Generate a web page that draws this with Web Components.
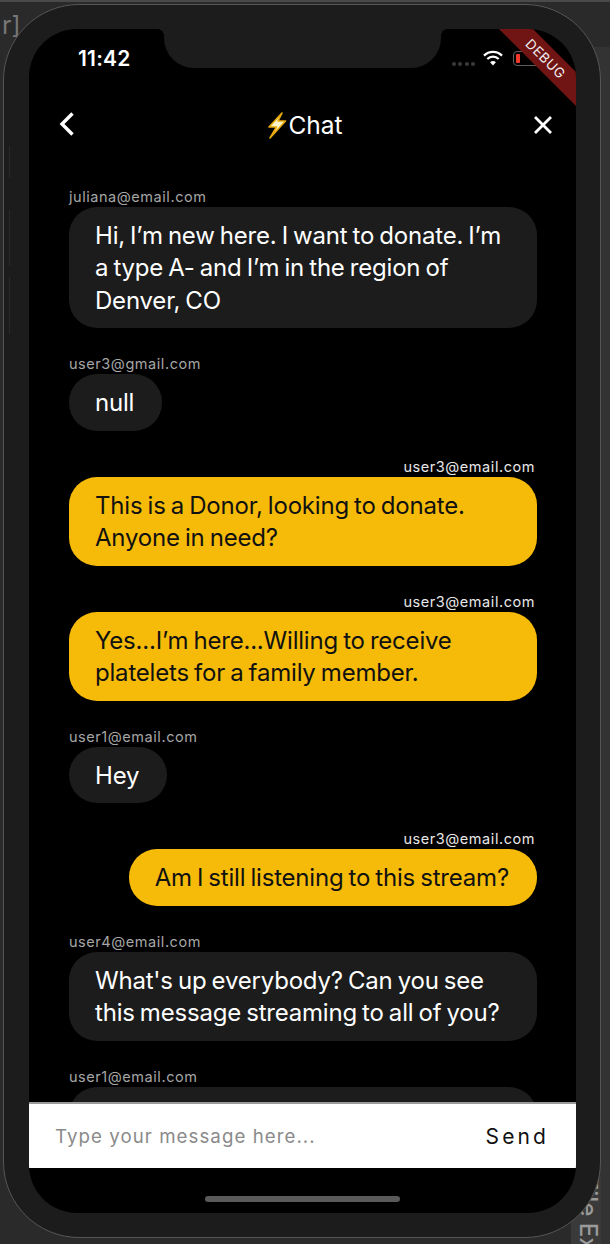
<!DOCTYPE html>
<html lang="en"><head><meta charset="utf-8"><title>Chat</title>
<style>
html,body{margin:0;padding:0;width:610px;height:1244px;overflow:hidden;background:#2a2a2a;font-family:Inter,"Liberation Sans",sans-serif}
</style></head><body>
<x-device>
  <x-status-bar slot="top"></x-status-bar>
  <x-app-bar slot="top" title="Chat"></x-app-bar>
  <x-message from="juliana@email.com">Hi, I’m new here. I want to donate. I’m a type A- and I’m in the region of Denver, CO</x-message>
  <x-message from="user3@gmail.com">null</x-message>
  <x-message from="user3@email.com" me>This is a Donor, looking to donate. Anyone in need?</x-message>
  <x-message from="user3@email.com" me>Yes...I’m here...Willing to receive platelets for a family member.</x-message>
  <x-message from="user1@email.com">Hey</x-message>
  <x-message from="user3@email.com" me>Am I still listening to this stream?</x-message>
  <x-message from="user4@email.com">What's up everybody? Can you see this message streaming to all of you?</x-message>
  <x-message from="user1@email.com" wide></x-message>
  <x-composer slot="bottom"></x-composer>
</x-device>
<script>
function def(name, html, init){
  customElements.define(name, class extends HTMLElement{
    constructor(){super();const r=this.attachShadow({mode:'open'});r.innerHTML=html;}
    connectedCallback(){init&&init(this,this.shadowRoot);}
  });
}
def('x-device',`<style>
:host{display:block;position:relative;isolation:isolate;width:610px;height:1244px;overflow:hidden;box-sizing:border-box;padding:2px 9px 6px 2px;color:#fff;background:#2a2a2a;
  border-top:2px solid #4a4a4a}
.frame{box-sizing:border-box;height:100%;background:#1c1c1c;border:1px solid #565656;border-radius:76px;padding:24px 24px 24px 25px;margin-left:1px}
.screen{position:relative;height:100%;background:#000;border-radius:48px;overflow:hidden;display:flex;flex-direction:column}
.list{flex:1;min-height:0;overflow:hidden;padding:27.5px 39px 0 40px;margin-top:-2px}
.foot{height:45px;flex:none;display:flex;justify-content:center;align-items:flex-end;padding-bottom:11px;box-sizing:border-box}
.home{width:195px;height:6px;border-radius:3px;background:#5a5a5a}
.r{position:absolute;left:2px;top:8px;font-size:25px;line-height:30px;color:#777;z-index:-1}
.fe{position:absolute;right:9px;bottom:0;width:30px;height:68px;writing-mode:vertical-rl;font-weight:500;font-size:24px;line-height:26px;color:#9a9a9a;z-index:-1;overflow:hidden;white-space:nowrap;background:#3a3a3a}
.rail{position:absolute;left:9px;width:1px;background:#2a2a2a}
.edge{position:absolute;right:9px;width:1px;top:160px;height:1000px;background:#4a4a4a;z-index:-1}
.panel{position:absolute;right:0;top:45px;width:30px;height:1200px;background:#333;z-index:-2}
</style>
<div class="panel"></div><div class="edge"></div>
<div class="r">r]</div><div class="fe">File Ex</div>
<div class="frame"><div class="screen"><slot name="top"></slot><div class="list"><slot></slot></div><slot name="bottom"></slot><div class="foot"><div class="home"></div></div></div></div>
<i class="rail" style="top:144px;height:32px"></i><i class="rail" style="top:208px;height:56px"></i><i class="rail" style="top:275px;height:57px"></i>`);

def('x-status-bar',`<style>
:host{display:flex;flex:none;height:60px;position:relative;align-items:flex-start;font-family:Inter,"Liberation Sans",sans-serif}
.time{margin:19px 0 0 49px;font-size:21px;font-weight:600;line-height:22px;letter-spacing:.2px}
.notch{position:absolute;left:135px;top:0;width:277px;height:39px;background:#1c1c1c;border-radius:0 0 30px 30px}
.notch::before,.notch::after{content:"";position:absolute;top:0;width:6px;height:6px}
.notch::before{left:-6px;background:radial-gradient(circle at 0 100%,transparent 5.5px,#1c1c1c 6px)}
.notch::after{right:-6px;background:radial-gradient(circle at 100% 100%,transparent 5.5px,#1c1c1c 6px)}
.icons{margin-left:auto;display:flex;align-items:flex-start;gap:8px;padding:21px 34px 0 0}
.dots{display:flex;gap:2.5px;margin-top:12px}.dots i{width:4px;height:4px;border-radius:50%;background:#3a3a3a}
.bat{width:29px;height:15px;box-sizing:border-box;border:1px solid #5e5e5e;border-radius:4px;padding:2px;margin-left:2px;margin-top:1px}
.bat i{display:block;width:4px;height:100%;background:#f0392b;border-radius:1px}
.ribbon{position:absolute;right:-38px;top:11px;width:150px;height:24px;box-sizing:border-box;padding-left:19px;background:#701414;transform:rotate(45deg);color:#eee;font-size:13.5px;font-weight:400;line-height:24px;text-align:center;letter-spacing:.6px}
</style>
<div class="time">11:42</div><div class="notch"></div>
<div class="icons"><div class="dots"><i></i><i></i><i></i><i></i></div>
<svg width="20" height="16" viewBox="0 0 20 16"><g fill="none" stroke="#fff" stroke-width="2.3"><path d="M1 5.6a12.8 12.8 0 0 1 18 0"/><path d="M4.3 9a8.2 8.2 0 0 1 11.4 0"/></g><path d="M7.1 12.2a4 4 0 0 1 5.8 0L10 15.4z" fill="#fff"/></svg>
<div class="bat"><i></i></div></div>
<div class="ribbon">DEBUG</div>`);

def('x-app-bar',`<style>
:host{display:flex;flex:none;height:72px;align-items:flex-start;justify-content:space-between;box-sizing:border-box;padding:0 23px 0 29px}
svg{display:block;flex:none}
.back{margin-top:22px}.close{margin-top:26px}
.title{display:flex;align-items:center;margin:22px 0 0 2px;font-size:24.5px;line-height:28px;color:#fff}
</style>
<svg class="back" width="17" height="26" viewBox="0 0 17 26"><path d="M14.500 2.500 4 13l10.500 10.500" fill="none" stroke="#fff" stroke-width="3.4"/></svg>
<div class="title"><svg width="20" height="27" viewBox="0 0 20 27" style="margin-right:1px"><path d="M15 1 2 15h7.500L3 26 18.500 9h-7.500z" fill="#fff5c8" stroke="#e9a90b" stroke-width="1.600" stroke-linejoin="round"/></svg><span id="t"></span></div>
<svg class="close" width="20" height="20" viewBox="0 0 20 20"><path d="M2 2l16 16M18 2 2 18" stroke="#fff" stroke-width="2.800" fill="none"/></svg>`,
(el,r)=>{r.getElementById('t').textContent=el.getAttribute('title')});

def('x-message',`<style>
:host{display:flex;flex-direction:column;align-items:flex-start;margin-bottom:26px}
:host([me]){align-items:flex-end}
.from{font-size:14.5px;line-height:20px;letter-spacing:.55px;color:#a6a6a6;white-space:nowrap}
:host([me]) .from{color:#e8e8e8;padding-right:2px}
.bubble{box-sizing:border-box;max-width:468px;padding:13px 28px 11px 26px;border-radius:28px;background:#1c1c1c;color:#fff;font-size:24px;line-height:32.5px;letter-spacing:-.2px;word-spacing:-1.4px}
:host([me]) .bubble{background:#f6bb09;color:#111}
:host([wide]) .bubble{width:468px;height:56.500px}
</style><div class="from" id="f"></div><div class="bubble"><slot></slot></div>`,
(el,r)=>{r.getElementById('f').textContent=el.getAttribute('from')});

def('x-composer',`<style>
:host{display:flex;flex:none;height:66px;box-sizing:border-box;align-items:center;justify-content:space-between;background:#fff;border-top:2px solid #9a9a9a;padding:1px 27px 0 26px}
.ph{font-size:18.7px;letter-spacing:1.05px;color:#8a8a8a}
.send{font-size:21px;letter-spacing:3.1px;color:#111}
</style><span class="ph">Type your message here...</span><span class="send">Send</span>`);
</script>
</body></html>
